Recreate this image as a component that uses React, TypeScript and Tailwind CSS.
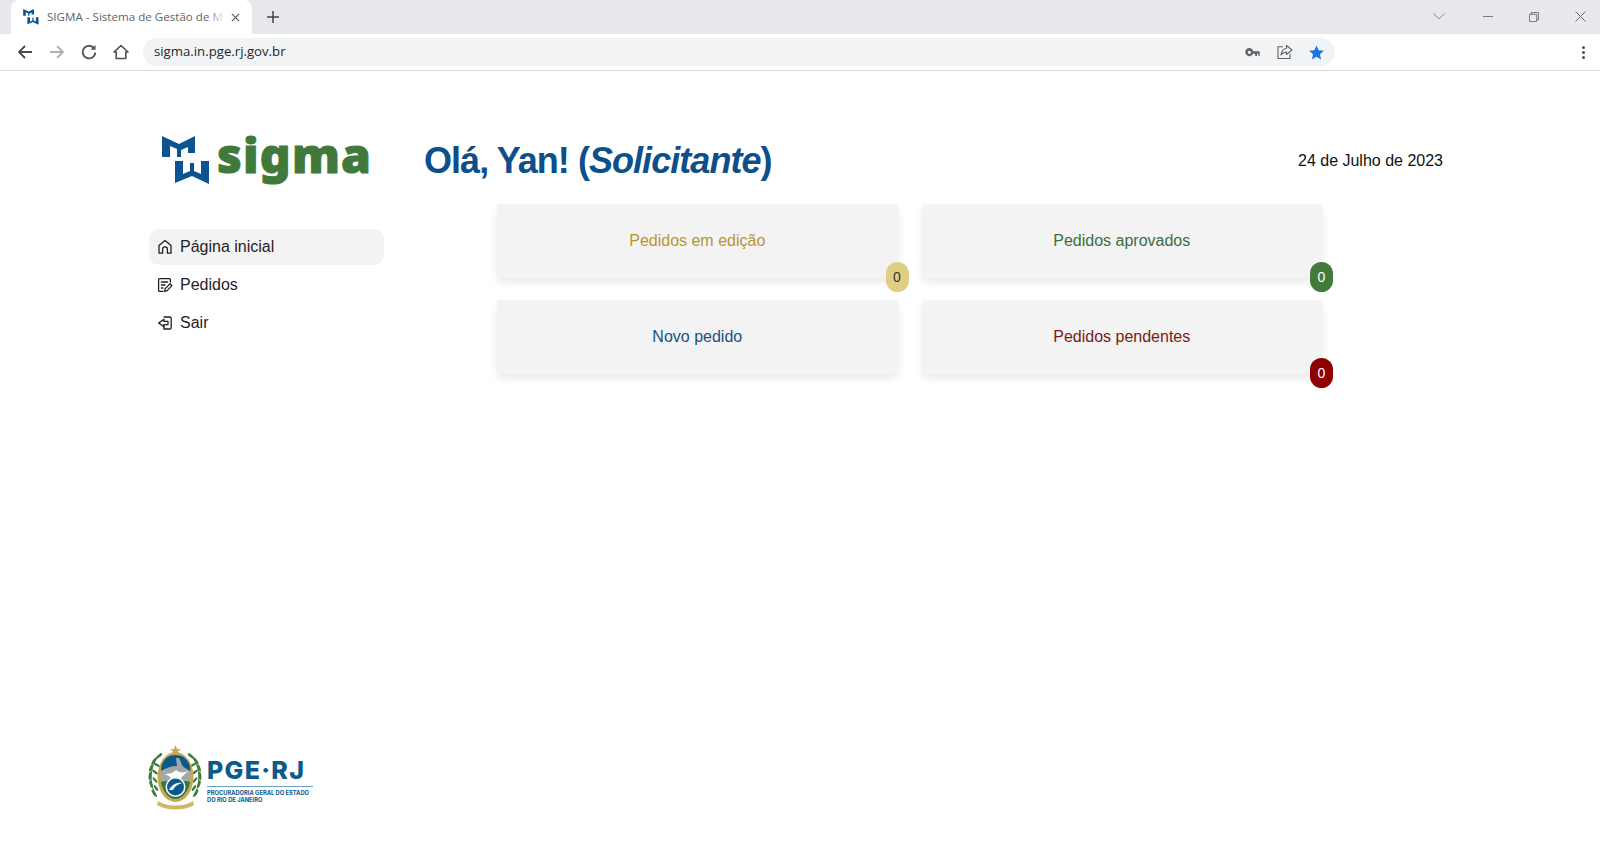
import { ReactNode } from 'react';

const sans = 'font-["Liberation_Sans",Arial,sans-serif]';

const MwMark = ({ className }: { className: string }) => (
  <svg viewBox="0 0 48 49" className={className} fill="#0b5391">
    <path d="M0 0 L17 8 L33 0 V17 H26 V11 L19 14 V21 H15 V13 L8 10 V21 H0 Z" />
    <path d="M13 25 H21 V38 L28 35 V27 H32 V35 L39 38 V25 H47 V48 L30 40 L13 47 Z" />
  </svg>
);

const Laurel = ({ flip }: { flip?: boolean }) => (
  <g transform={flip ? 'translate(60 0) scale(-1 1)' : undefined}>
    <path d="M14 15 C5 24 3 42 12 56" fill="none" stroke="#3d7d3a" strokeWidth="1" />
    <g fill="#3d7d3a">
      <ellipse cx="14" cy="15" rx="4" ry="1.4" transform="rotate(-40 14 15)" />
      <ellipse cx="9" cy="20" rx="4" ry="1.4" transform="rotate(-55 9 20)" />
      <ellipse cx="12" cy="24" rx="3.5" ry="1.2" transform="rotate(30 12 24)" />
      <ellipse cx="6" cy="27" rx="4" ry="1.4" transform="rotate(-70 6 27)" />
      <ellipse cx="10" cy="31" rx="3.5" ry="1.2" transform="rotate(40 10 31)" />
      <ellipse cx="5" cy="35" rx="4" ry="1.4" transform="rotate(-85 5 35)" />
      <ellipse cx="10" cy="39" rx="3.5" ry="1.2" transform="rotate(50 10 39)" />
      <ellipse cx="6" cy="43" rx="4" ry="1.4" transform="rotate(75 6 43)" />
      <ellipse cx="11" cy="47" rx="3.5" ry="1.2" transform="rotate(55 11 47)" />
      <ellipse cx="9" cy="52" rx="4" ry="1.4" transform="rotate(60 9 52)" />
    </g>
  </g>
);

const PgeCrest = () => (
  <svg viewBox="0 0 60 70" className="-ml-[4px] h-[70px] w-[60px] shrink-0">
    <Laurel />
    <Laurel flip />
    <path d="M30.5 4 L32 8 L36 8.2 L32.9 10.6 L34 14.4 L30.5 12.2 L27 14.4 L28.1 10.6 L25 8.2 L29 8 Z" fill="#c9a94f" />
    <ellipse cx="30.5" cy="36" rx="18" ry="25" fill="#c6a94d" />
    <ellipse cx="30.5" cy="36" rx="15" ry="22" fill="#a3a7aa" />
    <path d="M16 30 C16 20 22 14 30.5 14 C39 14 45.5 20 45.5 30 C41 28 38 26 37 24 L34 17 L31 17 L32 25 C26 25 21 27 16 30 Z" fill="#0b5a8c" />
    <path d="M19 33 C25 33 28 32 31 29 C34 32 38 32 43 30 C39 34 36 36 35 39 H27 C26 36 23 34 19 33 Z" fill="#fff" />
    <path d="M15.8 41 C22 39 39 39 45.2 41 C43 51 37 58 30.5 58 C24 58 18 51 15.8 41 Z" fill="#2f7a3b" />
    <circle cx="30.5" cy="46" r="10" fill="#fff" />
    <circle cx="30.5" cy="46" r="8.5" fill="#0b5a8c" />
    <path d="M24 49 C27 43 33 41 37 42 C33 43 30 45 28 49 Z" fill="#fff" />
    <path d="M13 60 C22 66 39 66 48 60 L49 64 C39 70 22 70 12 64 Z" fill="#d2b662" />
  </svg>
);

const HomeIcon = () => (
  <svg viewBox="0 0 16 16" className="h-4 w-4" fill="none" stroke="#1f1f1f" strokeWidth="1.3" strokeLinejoin="round">
    <path d="M2 14.2 V6.6 L8 1.6 L14 6.6 V14.2 H10.4 V10.2 C10.4 7 5.6 7 5.6 10.2 V14.2 Z" />
  </svg>
);

const EditIcon = () => (
  <svg viewBox="0 0 16 16" className="h-4 w-4" fill="none" stroke="#1f1f1f" strokeWidth="1.3" strokeLinecap="round" strokeLinejoin="round">
    <path d="M13.4 5 V2.6 C13.4 2 13 1.6 12.4 1.6 H2.6 C2 1.6 1.6 2 1.6 2.6 V13.4 C1.6 14 2 14.4 2.6 14.4 H6" />
    <path d="M4.4 5 H10.6 M4.4 8 H8 M4.4 11 H6" />
    <path d="M7.6 14.4 L8.2 11.6 L13.2 6.8 L15 8.6 L10.2 13.6 Z" />
  </svg>
);

const ExitIcon = () => (
  <svg viewBox="0 0 16 16" className="h-4 w-4" fill="none" stroke="#1f1f1f" strokeWidth="1.3" strokeLinecap="round" strokeLinejoin="round">
    <path d="M7 2 H12.6 C13.6 2 14.2 2.6 14.2 3.6 V12.4 C14.2 13.4 13.6 14 12.6 14 H7 V11.8" />
    <path d="M7 4.4 L1.6 8 L7 11.6 V9.6 H11 V6.4 H7 Z" />
  </svg>
);

const NavItem = ({ icon, label, active }: { icon: ReactNode; label: string; active?: boolean }) => (
  <div className={`flex h-9 items-center gap-[7px] rounded-[10px] pl-2 ${active ? 'bg-[#f3f3f3]' : ''}`}>
    {icon}
    <span className="text-[16px] text-[#1f2328]">{label}</span>
  </div>
);

const Card = ({ label, color, badge, badgeText }: { label: string; color: string; badge?: string; badgeText?: string }) => (
  <div className="relative flex h-[74px] items-center justify-center rounded bg-[#f3f3f3] shadow-[0_4px_8px_rgba(0,0,0,0.09)]">
    <span className={`text-[16px] ${color}`}>{label}</span>
    {badge && (
      <span className={`absolute bottom-[-14px] right-[-11px] flex h-[30px] w-[23px] items-center justify-center rounded-full text-[14px] ${badge} ${badgeText}`}>
        0
      </span>
    )}
  </div>
);

const BrowserChrome = () => (
  <div className={`shrink-0 ${sans}`}>
    <div className="flex h-[34px] items-end bg-[#e7e8ec]">
      <div className="ml-[11px] flex h-[34px] w-[241px] items-center rounded-t-lg bg-white pl-3 pr-3">
        <MwMark className="h-4 w-4 shrink-0" />
        <div className="relative ml-2 w-[178px] overflow-hidden whitespace-nowrap text-[11.6px] text-[#5f6368] font-['Open_Sans',sans-serif]">
          SIGMA - Sistema de Gestão de M
          <div className="absolute inset-y-0 right-0 w-[18px] bg-gradient-to-r from-transparent to-white" />
        </div>
        <svg viewBox="0 0 10 10" className="ml-auto h-[9px] w-[9px]" stroke="#5f6368" strokeWidth="1.4">
          <path d="M1 1 L9 9 M9 1 L1 9" />
        </svg>
      </div>
      <svg viewBox="0 0 12 12" className="mb-[11px] ml-[15px] h-3 w-3" stroke="#444" strokeWidth="1.5">
        <path d="M6 0 V12 M0 6 H12" />
      </svg>
      <div className="ml-auto mb-[12px] flex items-center gap-[36px] pr-[14px]">
        <svg viewBox="0 0 12 7" className="h-[7px] w-[12px]" fill="none" stroke="#8a8d91">
          <path d="M0.5 0.5 L6 6 L11.5 0.5" />
        </svg>
        <div className="ml-[2px] h-px w-[10px] bg-[#7a7c80]" />
        <svg viewBox="0 0 11 11" className="h-[10px] w-[10px]" fill="none" stroke="#6d6f73">
          <path d="M0.5 2.5 H8.5 V10.5 H0.5 Z M2.5 2.5 V0.5 H10.5 V8.5 H8.5" />
        </svg>
        <svg viewBox="0 0 11 11" className="h-[11px] w-[11px]" stroke="#6d6f73">
          <path d="M0.5 0.5 L10.5 10.5 M10.5 0.5 L0.5 10.5" />
        </svg>
      </div>
    </div>
    <div className="flex h-[37px] items-center border-b border-[#d9d9d9] bg-white pl-[17px]">
      <svg viewBox="0 0 16 16" className="h-4 w-4" fill="none" stroke="#4a4a4a" strokeWidth="1.8">
        <path d="M15 8 H2 M8 2 L2 8 L8 14" />
      </svg>
      <svg viewBox="0 0 16 16" className="ml-[16px] h-4 w-4" fill="none" stroke="#b0b0b0" strokeWidth="1.8">
        <path d="M1 8 H14 M8 2 L14 8 L8 14" />
      </svg>
      <svg viewBox="0 0 16 16" className="ml-[16px] h-4 w-4" fill="none" stroke="#4f4f4f" strokeWidth="1.8">
        <path d="M13.5 5 A6.3 6.3 0 1 0 14.3 8.5" />
        <path d="M14.5 1 V5.8 H9.7" fill="#4f4f4f" stroke="none" />
      </svg>
      <svg viewBox="0 0 16 16" className="ml-[16px] h-4 w-4" fill="none" stroke="#4f4f4f" strokeWidth="1.6" strokeLinejoin="round">
        <path d="M1 8 L8 1.5 L15 8 H12.8 V14.5 H3.2 V8 Z" />
      </svg>
      <div className="ml-[14px] flex h-7 w-[1192px] items-center rounded-full bg-[#f1f3f4] pl-[11px] pr-[11px]">
        <span className="text-[13.2px] text-[#26282b] font-['Open_Sans',sans-serif]">sigma.in.pge.rj.gov.br</span>
        <svg viewBox="0 0 16 10" className="ml-auto h-[9px] w-[15px]" fill="#5f6368">
          <path d="M4.5 0 A4.5 4.5 0 1 0 8.6 6.5 H11 V9 H13 V6.5 H14.5 V9 H16 V3.5 H8.6 A4.5 4.5 0 0 0 4.5 0 Z M4.5 3 A1.7 1.7 0 1 1 4.5 6.6 A1.7 1.7 0 1 1 4.5 3 Z" fillRule="evenodd" />
        </svg>
        <svg viewBox="0 0 16 16" className="ml-[17px] h-4 w-4" fill="none" stroke="#5f6368" strokeWidth="1.1" strokeLinejoin="round">
          <path d="M6 2.8 H1 V14.5 H13 V10" />
          <path d="M9.5 1.5 L15 6 L9.5 10.5 V8 C7 8 5.5 9 4 11 C4.5 7.5 6.5 4.5 9.5 4.2 Z" />
        </svg>
        <svg viewBox="0 0 16 16" className="ml-[16px] h-[15px] w-[15px]" fill="#1a73e8">
          <path d="M8 0.5 L10.3 5.6 L15.8 6.2 L11.7 9.9 L12.9 15.4 L8 12.6 L3.1 15.4 L4.3 9.9 L0.2 6.2 L5.7 5.6 Z" />
        </svg>
      </div>
      <div className="ml-auto mr-[15px] flex flex-col gap-[2px]">
        <div className="h-[3px] w-[3px] rounded-full bg-[#4f4f4f]" />
        <div className="h-[3px] w-[3px] rounded-full bg-[#4f4f4f]" />
        <div className="h-[3px] w-[3px] rounded-full bg-[#4f4f4f]" />
      </div>
    </div>
  </div>
);

export default function App() {
  return (
    <div className={`flex h-[860px] w-[1600px] flex-col overflow-hidden bg-white ${sans}`}>
      <BrowserChrome />
      <div className="flex min-h-0 flex-1 pl-[149px] pr-[157px]">
        {/* Sidebar */}
        <aside className="flex w-[235px] shrink-0 flex-col pb-[49px] pt-[63px]">
          <div className="flex h-[52px] items-center pl-[13px]">
            <MwMark className="h-[49px] w-[48px] shrink-0" />
            <span className="mb-[10px] ml-[7px] font-['Noto_Sans',sans-serif] text-[48px] font-black leading-none tracking-[1.2px] text-[#3f7a3c] [-webkit-text-stroke:1px_#3f7a3c]">
              sigma
            </span>
          </div>
          <nav className="mt-[43px] flex flex-col gap-[2px]">
            <NavItem icon={<HomeIcon />} label="Página inicial" active />
            <NavItem icon={<EditIcon />} label="Pedidos" />
            <NavItem icon={<ExitIcon />} label="Sair" />
          </nav>
          <div className="mt-auto flex items-start">
            <PgeCrest />
            <div className="ml-[2px] mt-[16px] w-[106px]">
              <div className="font-['Inter',sans-serif] text-[25px] font-extrabold leading-[26px] tracking-[1.3px] text-[#0b5a8c]">PGE·RJ</div>
              <div className="mt-[3px] border-t border-[#6da0c3] pt-[2px] font-['Inter',sans-serif] text-[5.75px] font-bold leading-[7px] text-[#0b5a8c]">
                PROCURADORIA GERAL DO ESTADO
                <br />
                DO RIO DE JANEIRO
              </div>
            </div>
          </div>
        </aside>

        {/* Main */}
        <main className="min-w-0 flex-1 pl-[40px]">
          <header className="mb-[21px] mt-[68px] flex items-center justify-between">
            <h1 className="text-[36px] font-bold leading-[44px] tracking-[-0.95px] text-[#0d4f8b]">
              Olá, Yan! (<em>Solicitante</em>)
            </h1>
            <span className="text-[16px] text-[#111]">24 de Julho de 2023</span>
          </header>
          <div className="ml-[73px] grid w-[825px] grid-cols-2 gap-x-[24px] gap-y-[22px]">
            <Card label="Pedidos em edição" color="text-[#b8962e]" badge="bg-[#dfcf85]" badgeText="text-[#333]" />
            <Card label="Pedidos aprovados" color="text-[#3f6e3a]" badge="bg-[#417a3a]" badgeText="text-white" />
            <Card label="Novo pedido" color="text-[#1d4f7c]" />
            <Card label="Pedidos pendentes" color="text-[#7a1a14]" badge="bg-[#8f0000]" badgeText="text-white" />
          </div>
        </main>
      </div>
    </div>
  );
}
